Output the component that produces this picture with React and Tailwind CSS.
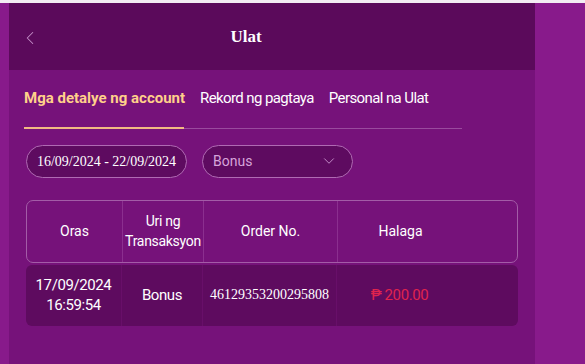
import { ChevronLeft, ChevronDown } from "lucide-react";

const cols = "grid grid-cols-[95px_81px_134px_126px_1fr]";

export default function App() {
    return (
        <div className="w-[585px] h-[364px] bg-[#881a8b] overflow-hidden font-['Roboto',sans-serif] border-t-[3px] border-[#f3ecf3]">
            <div className="ml-[9px] w-[526px] h-full bg-[#76127a] flex flex-col">
                {/* header */}
                <div className="h-[67px] bg-[#5b0a5b] flex items-center relative">
                    <ChevronLeft className="absolute left-[10px] top-[24px] w-[22px] h-[22px] text-[#c48fc8]" strokeWidth={1.1} />
                    <h1 className="w-full text-center pr-[52px] text-white text-[17px] font-bold font-['Liberation_Serif',serif]">Ulat</h1>
                </div>

                {/* tabs */}
                <div className="px-[15px]">
                    <div className="flex items-end w-[438px] border-b border-[#9a4a9e] pt-[17px] text-white">
                        <div className="w-[160px] pb-[17px] border-b-2 border-[#f2b982] -mb-px text-[15px] text-[#ffd08a] font-bold whitespace-nowrap">Mga detalye ng account</div>
                        <div className="ml-[16px] pb-[18px] text-[15px] tracking-[-0.6px] whitespace-nowrap">Rekord ng pagtaya</div>
                        <div className="ml-[15px] pb-[18px] text-[15px] tracking-[-0.6px] whitespace-nowrap">Personal na Ulat</div>
                    </div>
                </div>

                {/* filters */}
                <div className="flex gap-[15px] px-[17px] mt-[16px]">
                    <div className="w-[161px] h-[33px] rounded-full border border-[#b06ab3] bg-[#5e0b60] flex items-center justify-center text-white text-[14px] font-['Liberation_Serif',serif]">
                        16/09/2024 - 22/09/2024
                    </div>
                    <div className="w-[151px] h-[33px] rounded-full border border-[#b06ab3] bg-[#5e0b60] flex items-center justify-between pl-[10px] pr-[14px] text-[#d6a4da] text-[14px]">
                        <span>Bonus</span>
                        <ChevronDown className="w-[18px] h-[18px] text-[#d6a4da]" strokeWidth={1.1} />
                    </div>
                </div>

                {/* table */}
                <div className="px-[17px] mt-[22px]">
                    <div className={`${cols} h-[63px] rounded-[7px] border border-[#a35ca7] text-white text-[14px] text-center leading-[20px]`}>
                        <div className="flex items-center justify-center">Oras</div>
                        <div className="flex items-center justify-center border-l border-[#8b2f8f] whitespace-nowrap tracking-[-0.3px]">Uri ng<br />Transaksyon</div>
                        <div className="flex items-center justify-center border-l border-[#8b2f8f]">Order No.</div>
                        <div className="flex items-center justify-center border-l border-[#8b2f8f]">Halaga</div>
                        <div></div>
                    </div>
                    <div className={`${cols} h-[61px] mt-[2px] rounded-[6px] bg-[#5e0b5f] text-white text-[15px] tracking-[-0.4px] text-center leading-[20px]`}>
                        <div className="flex items-center justify-center">17/09/2024<br />16:59:54</div>
                        <div className="flex items-center justify-center border-l border-[#680f69]">Bonus</div>
                        <div className="flex items-center justify-center border-l border-[#680f69] text-[14px] tracking-normal font-['Liberation_Serif',serif]">46129353200295808</div>
                        <div className="flex items-center justify-center border-l border-[#680f69] text-[#e0244e]">₱ 200.00</div>
                        <div></div>
                    </div>
                </div>
            </div>
        </div>
    );
}
